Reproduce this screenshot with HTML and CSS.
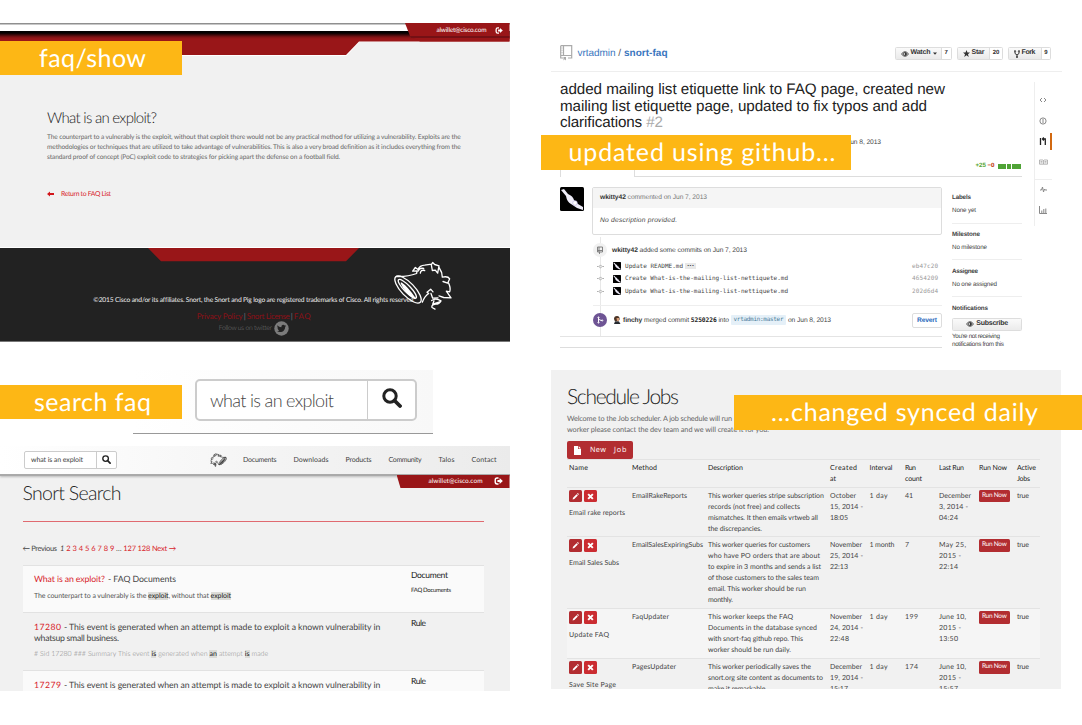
FILE: index.html
```html
<!DOCTYPE html>
<html lang="en">
<head>
<meta charset="utf-8">
<title>Snort FAQ workflow</title>
<link rel="stylesheet" href="styles.css">
</head>
<body>
<svg class="defs" width="0" height="0">
  <symbol id="pig" viewBox="370 118 180 152">
    <g class="pig-lines" fill="none" stroke="currentColor" stroke-linejoin="round" stroke-linecap="round">
      <ellipse cx="415" cy="206" rx="53" ry="20" transform="rotate(46 415 206)"/>
      <ellipse cx="413" cy="204" rx="38" ry="10" transform="rotate(46 413 204)"/>
      <path d="M395 187Q412 198 436 233Q408 217 395 187" fill="currentColor"/>
      <path d="M380 167Q415 168 441 158L442 150L429 151L437 140L445 146Q450 134 465 133L486 130L489 125L495 131L508 135L504 157L497 148L488 149L485 132M445 151Q450 140 462 143M452 157Q453 146 465 149M508 140Q518 154 518 169Q535 165 540 174L534 187L520 182M537 187Q544 203 540 213L530 211L544 231L522 230L508 225M458 244Q465 226 477 218L472 214L483 205L490 213M484 218L489 232L505 231M486 239Q499 230 514 240Q509 250 498 250Q484 252 487 260L496 265M493 240L489 250L510 243"/>
    </g>
  </symbol>
  <symbol id="logout" viewBox="0 0 24 22">
    <path d="M12 3H8Q3 3 3 8V14Q3 19 8 19H12" fill="none" stroke="currentColor" stroke-width="4"/>
    <path d="M9 8H15V3L24 11L15 19V14H9Z" fill="currentColor"/>
  </symbol>
  <symbol id="search" viewBox="0 0 20 20">
    <circle cx="8" cy="8" r="6.2" fill="none" stroke="currentColor" stroke-width="3"/>
    <path d="M12.5 12.5L18 18" stroke="currentColor" stroke-width="3.8" stroke-linecap="round"/>
  </symbol>
  <symbol id="eye" viewBox="0 0 16 12">
    <path d="M1 6Q8-3 15 6Q8 15 1 6Z" fill="none" stroke="currentColor" stroke-width="1.8"/>
    <circle cx="8" cy="6" r="3" fill="none" stroke="currentColor" stroke-width="1.6"/><path d="M8 3A3 3 0 0 1 8 9Z" fill="currentColor"/>
  </symbol>
  <symbol id="commit" viewBox="0 0 18 12">
    <path d="M0 6H4M14 6H18M9 2L13 6L9 10L5 6Z" fill="none" stroke="currentColor" stroke-width="2.4"/>
  </symbol>
  <symbol id="avatar" viewBox="0 0 24 24">
    <rect width="24" height="24" rx="1.5" fill="#000"/>
    <path d="M1 3L4 2L8 7Q13 9 14 13L18 17L23 20V23L17 21L11 17Q7 15 6 9Z" fill="#eeecf8"/>
    <circle cx="15" cy="16" r="2.3" fill="#fff" stroke="#b6abdd" stroke-width=".6"/>
  </symbol>
  <symbol id="pencil" viewBox="0 0 12 12">
    <path d="M1 11L1.8 8L7.8 2L10 4.2L4 10.2ZM8.5 1.3L9.3.6Q10 0 10.7.7L11.4 1.4Q12 2 11.4 2.7L10.7 3.5Z" fill="currentColor"/>
  </symbol>
  <symbol id="cross" viewBox="0 0 12 12">
    <path d="M2 2L10 10M10 2L2 10" stroke="currentColor" stroke-width="3.4"/>
  </symbol>
</svg>

<main class="board">
  <div class="column">
    <section class="panel faq">
      <svg class="faq-shapes" width="510" height="36" viewBox="0 0 510 36">
        <defs><linearGradient id="shade" x1="0" y1="0" x2="0" y2="1">
          <stop offset="0" stop-color="#000"/><stop offset=".25" stop-color="#050000"/><stop offset=".75" stop-color="#7d1214"/><stop offset="1" stop-color="#991618"/>
        </linearGradient></defs>
        <path d="M0 8H510V19H359.5L346.5 33H0Z" fill="#fff"/>
        <path d="M0 8H509.500V18.500H359L346 32H0Z" fill="#991618"/>
        <rect width="510" height="8" fill="#fff"/>
        <rect width="510" height="1.500" fill="#8f8f8f"/>
        <rect y="8" width="509.500" height="8" fill="url(#shade)"/>
        <path d="M405 0H509.500V18.500H420L410 13Z" fill="#991618"/>
        <path d="M411 13H509.500V15H411Z" fill="#741014"/>
      </svg>
      <div class="user user-top"><span class="f" data-w="50">alwillet@cisco.com</span><svg width="8" height="7"><use href="#logout"/></svg></div>
      <div class="faq-body">
        <h2><span class="f" data-w="110">What is an exploit?</span></h2>
        <p>
          <span class="f" data-w="414">The counterpart to a vulnerably is the exploit, without that exploit there would not be any practical method for utilizing a vulnerability. Exploits are the</span>
          <span class="f" data-w="414">methodologies or techniques that are utilized to take advantage of vulnerabilities. This is also a very broad definition as it includes everything from the</span>
          <span class="f" data-w="293">standard proof of concept (PoC) exploit code to strategies for picking apart the defense on a football field.</span>
        </p>
        <a class="back"><svg width="7" height="6" viewBox="0 0 7 6"><path d="M0 3L3 .4V2H7V4H3V5.600Z" fill="#d2151b"/></svg><span class="f" data-w="50">Return to FAQ List</span></a>
      </div>
      <footer class="footer">
        <svg class="notch" width="212" height="14" viewBox="0 0 212 14"><path d="M0 0H211L198 13.300H13Z" fill="#991618"/></svg>
        <svg class="footer-pig" width="60" height="51"><use href="#pig"/></svg>
        <div class="copy"><span class="f" data-w="320">©2015 Cisco and/or its affiliates. Snort, the Snort and Pig logo are registered trademarks of Cisco. All rights reserved</span></div>
        <div class="links"><span class="f" data-w="46">Privacy Policy</span><i>|</i><span class="f" data-w="43">Snort License</span><i>|</i><span class="f" data-w="17">FAQ</span></div>
        <div class="follow"><span class="f" data-w="53">Follow us on twitter</span>
          <svg width="15" height="15" viewBox="0 0 15 15"><circle cx="7.500" cy="7.500" r="7.200" fill="#7b7b7b"/><path d="M3.300 4.300Q5 6.100 7.300 6.200Q7.200 3.900 9 3.800Q10 3.700 10.600 4.400L11.900 4L11.300 5L12 5L11.200 5.800Q11 9.500 8.200 10.700Q5.500 11.700 3 10.300Q4.600 10.200 5.200 9.600Q4 9.200 3.800 8.300H4.500Q3.300 7.600 3.300 6.500L4 6.700Q3 5.500 3.300 4.300Z" fill="#222"/></svg>
        </div>
      </footer>
      <div class="label label-show"><span class="f" data-w="107">faq/show</span></div>
    </section>

    <section class="panel lookup">
      <div class="field field-big"><div class="value"><span class="f" data-w="124">what is an exploit</span></div><div class="go"><svg width="20" height="20"><use href="#search"/></svg></div></div>
      <div class="label label-search"><span class="f" data-w="117">search faq</span></div>
    </section>

    <section class="panel results">
      <header class="topbar">
        <div class="field field-small"><div class="value"><span class="f" data-w="52">what is an exploit</span></div><div class="go"><svg width="9" height="9"><use href="#search"/></svg></div></div>
        <svg class="mini-pig" width="17" height="14"><use href="#pig"/></svg>
        <nav>
          <span class="f" data-w="33.500">Documents</span><span class="f" data-w="35">Downloads</span><span class="f" data-w="26">Products</span><span class="f" data-w="33">Community</span><span class="f" data-w="16">Talos</span><span class="f" data-w="25">Contact</span>
        </nav>
      </header>
      <div class="user user-tab"><span class="f" data-w="54">alwillet@cisco.com</span><svg width="9" height="8"><use href="#logout"/></svg></div>
      <div class="results-body">
        <h2><span class="f" data-w="99">Snort Search</span></h2>
        <div class="pages"><span class="f" data-w="34.500">← Previous</span><em>1</em><span class="f red" data-w="48">2 3 4 5 6 7 8 9</span><b>…</b><span class="f red" data-w="53">127 128 Next →</span></div>
        <article class="hit lit">
          <div class="hit-text">
            <div class="hit-title"><span class="f red" data-w="71">What is an exploit?</span><span class="f" data-w="68">- FAQ Documents</span></div>
            <div class="snippet dark"><span class="f" data-w="197">The counterpart to a vulnerably is the <mark>exploit</mark>, without that <mark>exploit</mark></span></div>
          </div>
          <div class="kind"><span class="f" data-w="37">Document</span><small class="f" data-w="40">FAQ Documents</small></div>
        </article>
        <article class="hit second">
          <div class="hit-text">
            <div class="hit-title"><span class="f red" data-w="27">17280</span><span class="f" data-w="316">- This event is generated when an attempt is made to exploit a known vulnerability in</span></div>
            <div class="hit-title"><span class="f" data-w="85">whatsup small business.</span></div>
            <div class="snippet"><span class="f" data-w="234"># Sid 17280 ### Summary This event <mark>is</mark> generated when <mark>an</mark> attempt <mark>is</mark> made</span></div>
          </div>
          <div class="kind"><span class="f" data-w="15">Rule</span></div>
        </article>
        <article class="hit lit third">
          <div class="hit-text">
            <div class="hit-title"><span class="f red" data-w="27">17279</span><span class="f" data-w="316">- This event is generated when an attempt is made to exploit a known vulnerability in</span></div>
          </div>
          <div class="kind"><span class="f" data-w="15">Rule</span></div>
        </article>
      </div>
    </section>
  </div>

  <div class="column column-right">
    <section class="github">
      <header class="repo">
        <svg width="13" height="17" viewBox="0 0 13 17" fill="none" stroke="#aaa"><path d="M.7.7H11.700V13H8M3 13H.700V.700M3.500.700V10.500M.700 10.500H11.700" stroke-width="1.200"/><path d="M2 2.500V9.500" stroke-dasharray="1 1.300" stroke-width=".8"/><path d="M3.500 12H6V15.500L4.700 14.200L3.500 15.500Z" fill="#aaa" stroke="none"/></svg>
        <div class="repo-name"><span class="f" data-w="38">vrtadmin</span><i>/</i><b class="f" data-w="43.500">snort-faq</b></div>
        <div class="social">
          <div class="pill watch"><b><svg width="8" height="6"><use href="#eye"/></svg><span class="f" data-w="20">Watch</span><svg width="4" height="3" viewBox="0 0 4 3"><path d="M0 .500H4L2 2.800Z" fill="#333"/></svg></b><span>7</span></div>
          <div class="pill star"><b><svg width="7" height="7" viewBox="0 0 14 14"><path d="M7 0L9 5H14L10 8.500L11.500 14L7 10.500L2.500 14L4 8.500L0 5H5Z" fill="#333"/></svg><span class="f" data-w="13">Star</span></b><span>20</span></div>
          <div class="pill fork"><b><svg width="6" height="8" viewBox="0 0 12 16" fill="none" stroke="#333" stroke-width="2"><path d="M2 4V7L6 10L10 7V4M6 10V13"/><circle cx="2" cy="2.500" r="1.300"/><circle cx="10" cy="2.500" r="1.300"/><circle cx="6" cy="14" r="1.300"/></svg><span class="f" data-w="14">Fork</span></b><span>9</span></div>
        </div>
      </header>
      <div class="gh-main">
        <div class="gh-content">
          <h1><span class="f" data-w="385">added mailing list etiquette link to FAQ page, created new</span><span class="f" data-w="367">mailing list etiquette page, updated to fix typos and add</span><span class="f" data-w="103">clarifications <i>#2</i></span></h1>
          <div class="meta"><span class="f" data-w="34">Jun 8, 2013</span></div>
          <div class="tabs"><div class="tab"><span class="f" data-w="56">◦ Conversation 0</span></div><div class="tabs-rest"><span class="f" data-w="34">Commits 3</span><span class="f" data-w="63">▣ Files changed 2</span><div class="diff"><b class="plus">+25</b><b class="minus">−0</b><u></u><u></u><u></u><u></u><u></u></div></div></div>
          <div class="gh-cols">
            <div class="thread">
              <div class="comment-row">
                <svg width="24" height="24"><use href="#avatar"/></svg>
                <div class="comment"><div class="comment-head"><span class="f" data-w="107"><b>wkitty42</b> commented on Jun 7, 2013</span></div><div class="comment-body"><span class="f" data-w="77">No description provided.</span></div></div>
              </div>
              <div class="timeline">
                <div class="event"><span class="dot"><svg width="8" height="8" viewBox="0 0 8 8" fill="none" stroke="#777" stroke-width=".9"><path d="M1.500 1H6.500V6H1.500ZM3 1V6M1.500 4.500H6.500M3.500 6V8"/></svg></span><span class="f" data-w="135"><b>wkitty42</b> added some commits on Jun 7, 2013</span></div>
                <div class="commits">
                  <div class="commit"><svg width="7" height="5"><use href="#commit"/></svg><svg width="8" height="8"><use href="#avatar"/></svg><span class="f" data-w="58">Update README.md</span><span class="more">•••</span><span class="f sha" data-w="26">eb47c20</span></div>
                  <div class="commit"><svg width="7" height="5"><use href="#commit"/></svg><svg width="8" height="8"><use href="#avatar"/></svg><span class="f" data-w="163">Create What-is-the-mailing-list-nettiquete.md</span><span class="f sha" data-w="26">4654209</span></div>
                  <div class="commit"><svg width="7" height="5"><use href="#commit"/></svg><svg width="8" height="8"><use href="#avatar"/></svg><span class="f" data-w="163">Update What-is-the-mailing-list-nettiquete.md</span><span class="f sha" data-w="26">202d6d4</span></div>
                </div>
                <div class="merge">
                  <span class="dot purple"><svg width="8" height="8" viewBox="0 0 8 8" fill="none" stroke="#fff"><path d="M2.500 1.500V6.500M2.500 2.500Q3 4.500 6 4.500"/><circle cx="2.500" cy="1.500" r=".6"/><circle cx="2.500" cy="6.500" r=".6"/><circle cx="6.200" cy="4.500" r=".6"/></svg></span>
                  <svg width="8" height="8" viewBox="0 0 8 8"><path d="M1 3Q1 0 4 0Q7 0 6.500 3.500L5.500 5.500H2Z" fill="#4b3325"/><path d="M3.500 2H6V5H4Z" fill="#d79c77"/><path d="M1 8L2 5.500H6L7.500 8Z" fill="#252a30"/></svg>
                  <span class="f" data-w="106"><b>finchy</b> merged commit <code>5250226</code> into</span><span class="branch"><span class="f" data-w="50">vrtadmin:master</span></span><span class="f" data-w="43">on Jun 8, 2013</span><span class="revert"><b class="f" data-w="20">Revert</b></span>
                </div>
              </div>
              <div class="next"></div>
            </div>
            <aside class="side">
              <div class="side-block"><b class="f" data-w="19">Labels</b><span class="f" data-w="24">None yet</span></div>
              <div class="side-block"><b class="f" data-w="28">Milestone</b><span class="f" data-w="35">No milestone</span></div>
              <div class="side-block"><b class="f" data-w="26">Assignee</b><span class="f" data-w="45">No one assigned</span></div>
              <div class="side-block last"><b class="f" data-w="36">Notifications</b><div class="subscribe"><svg width="8" height="6"><use href="#eye"/></svg><b class="f" data-w="32">Subscribe</b></div><span class="f tight" data-w="48">You're not receiving</span><span class="f tight" data-w="52">notifications from this</span></div>
            </aside>
          </div>
        </div>
        <div class="rail">
          <span><svg width="8" height="6" viewBox="0 0 8 6"><path d="M3 1L1 3L3 5M5 1L7 3L5 5"/></svg></span>
          <span><svg width="8" height="8" viewBox="0 0 8 8"><circle cx="4" cy="4" r="3.100"/><path d="M4 2V6"/></svg></span>
          <span class="on"><svg width="8" height="9" viewBox="0 0 8 9"><path d="M1.500 1V8M3.500 2H6.300V8M4.800.500L3.500 2L4.800 3.500" stroke-width="1.300"/></svg></span>
          <span class="pale"><svg width="9" height="6" viewBox="0 0 9 6"><path d="M.500 1H4L4.500 1.500L5 1H8.500V5.200H.500ZM4.500 1.500V5M1.500 2.500H3.500M5.500 2.500H7.500M1.500 3.800H3.500M5.500 3.800H7.500" stroke-width=".7"/></svg></span>
          <span class="gap"><svg width="7" height="7" viewBox="0 0 7 7"><path d="M0 4H1.500L2.500 1L3.500 6L4.500 3L5.200 4H7"/></svg></span>
          <span><svg width="8" height="8" viewBox="0 0 8 8"><path d="M.500 0V7.500H8M2.800 7V4.500M4.800 7V3M6.800 7V2.500"/></svg></span>
        </div>
      </div>
    </section>
    <div class="label label-github"><span class="f" data-w="267">updated using github...</span></div>

    <section class="panel jobs">
      <h2><span class="f" data-w="112">Schedule Jobs</span></h2>
      <p><span class="f" data-w="165">Welcome to the Job scheduler. A job schedule will run</span><span class="f" data-w="202">worker please contact the dev team and we will create it for you.</span></p>
      <div class="new-job"><svg width="7" height="9" viewBox="0 0 7 9"><path d="M0 0H4V3H7V9H0Z" fill="#fff"/><path d="M4.700 0L7 2.400H4.700Z" fill="#fff"/></svg><span class="f" data-w="16">New</span><span class="f" data-w="12.500">Job</span></div>
      <div class="table">
        <div class="row head">
          <div><span class="f" data-w="19">Name</span></div><div><span class="f" data-w="25">Method</span></div><div><span class="f" data-w="35">Description</span></div><div><span class="f" data-w="27">Created</span><span>at</span></div><div><span class="f" data-w="23">Interval</span></div><div><span class="f" data-w="11">Run</span><span class="f" data-w="17">count</span></div><div><span class="f" data-w="25">Last Run</span></div><div><span class="f" data-w="28">Run Now</span></div><div><span class="f" data-w="19">Active</span><span class="f" data-w="13">Jobs</span></div>
        </div>
        <div class="row r1">
          <div><div class="acts"><i><svg width="8" height="8"><use href="#pencil"/></svg></i><i><svg width="8" height="8"><use href="#cross"/></svg></i></div><span class="f" data-w="56">Email rake reports</span></div>
          <div><span class="f" data-w="55">EmailRakeReports</span></div>
          <div><span class="f" data-w="116">This worker queries stripe subscription</span><span class="f" data-w="92">records (not free) and collects</span><span class="f" data-w="110">mismatches. It then emails vrtweb all</span><span class="f" data-w="54">the discrepancies.</span></div>
          <div><span class="f" data-w="26">October</span><span class="f" data-w="33">15, 2014 -</span><span class="f" data-w="18">18:05</span></div>
          <div><span class="f" data-w="18">1 day</span></div><div><span class="f" data-w="8">41</span></div>
          <div><span class="f" data-w="32">December</span><span class="f" data-w="29">3, 2014 -</span><span class="f" data-w="19">04:24</span></div>
          <div><strong><span class="f" data-w="25">Run Now</span></strong></div><div><span class="f" data-w="12">true</span></div>
        </div>
        <div class="row r2">
          <div><div class="acts"><i><svg width="8" height="8"><use href="#pencil"/></svg></i><i><svg width="8" height="8"><use href="#cross"/></svg></i></div><span class="f" data-w="50">Email Sales Subs</span></div>
          <div><span class="f" data-w="71">EmailSalesExpiringSubs</span></div>
          <div><span class="f" data-w="102">This worker queries for customers</span><span class="f" data-w="112">who have PO orders that are about</span><span class="f" data-w="113">to expire in 3 months and sends a list</span><span class="f" data-w="111">of those customers to the sales team</span><span class="f" data-w="98">email. This worker should be run</span><span class="f" data-w="25">monthly.</span></div>
          <div><span class="f" data-w="32">November</span><span class="f" data-w="33">25, 2014 -</span><span class="f" data-w="18">22:13</span></div>
          <div><span class="f" data-w="25">1 month</span></div><div><span>7</span></div>
          <div><span class="f" data-w="27">May 25,</span><span class="f" data-w="22">2015 -</span><span class="f" data-w="19">22:14</span></div>
          <div><strong><span class="f" data-w="25">Run Now</span></strong></div><div><span class="f" data-w="12">true</span></div>
        </div>
        <div class="row r3">
          <div><div class="acts"><i><svg width="8" height="8"><use href="#pencil"/></svg></i><i><svg width="8" height="8"><use href="#cross"/></svg></i></div><span class="f" data-w="40">Update FAQ</span></div>
          <div><span class="f" data-w="37">FaqUpdater</span></div>
          <div><span class="f" data-w="85">This worker keeps the FAQ</span><span class="f" data-w="109">Documents in the database synced</span><span class="f" data-w="95">with snort-faq github repo. This</span><span class="f" data-w="83">worker should be run daily.</span></div>
          <div><span class="f" data-w="32">November</span><span class="f" data-w="33">24, 2014 -</span><span class="f" data-w="19">22:48</span></div>
          <div><span class="f" data-w="18">1 day</span></div><div><span class="f" data-w="13">199</span></div>
          <div><span class="f" data-w="27">June 10,</span><span class="f" data-w="22">2015 -</span><span class="f" data-w="19">13:50</span></div>
          <div><strong><span class="f" data-w="25">Run Now</span></strong></div><div><span class="f" data-w="12">true</span></div>
        </div>
        <div class="row r4">
          <div><div class="acts"><i><svg width="8" height="8"><use href="#pencil"/></svg></i><i><svg width="8" height="8"><use href="#cross"/></svg></i></div><span class="f" data-w="47">Save Site Page</span></div>
          <div><span class="f" data-w="44">PagesUpdater</span></div>
          <div><span class="f" data-w="103">This worker periodically saves the</span><span class="f" data-w="115">snort.org site content as documents to</span><span class="f" data-w="59">make it remarkable.</span></div>
          <div><span class="f" data-w="32">December</span><span class="f" data-w="33">19, 2014 -</span><span class="f" data-w="18">15:17</span></div>
          <div><span class="f" data-w="18">1 day</span></div><div><span class="f" data-w="13">174</span></div>
          <div><span class="f" data-w="27">June 10,</span><span class="f" data-w="22">2015 -</span><span class="f" data-w="19">15:57</span></div>
          <div><strong><span class="f" data-w="25">Run Now</span></strong></div><div><span class="f" data-w="12">true</span></div>
        </div>
      </div>
    </section>
    <div class="label label-daily"><span class="f" data-w="267">...changed synced daily</span></div>
  </div>
</main>
<script src="fit.js"></script>
</body>
</html>
```

FILE: styles.css
```css
* { box-sizing: border-box; }
body { margin: 0; width: 1082px; height: 725px; overflow: hidden; background: #fff; color: #444; font-family: Lato, "Liberation Sans", sans-serif; font-weight: 300; text-rendering: geometricPrecision; }
h1, h2, p { margin: 0; font-weight: 300; }
h2 { color: #222; }
svg { display: block; flex: none; }
.defs { position: absolute; }
.pig-lines { stroke-width: var(--pig-line, 4); }
.f { display: inline-block; white-space: pre; flex: none; }
.red { color: #d8232a; }

.board { position: relative; display: grid; grid-template-columns: 551px 531px; height: 725px; }
.column { padding-top: 23px; }
.column-right { padding-top: 40px; }

/* slide captions */
.label { position: absolute; display: flex; align-items: center; height: 34.500px; background: #fdb715; color: #fff; font-size: 25px; font-weight: 400; line-height: 34px; z-index: 2; }
.label-show { left: 0; top: 40.500px; width: 181.500px; padding-left: 39px; }
.label-search { left: 0; top: 384.500px; width: 181.500px; padding-left: 34px; }
.label-github { left: 540.500px; top: 135px; width: 310.500px; padding-left: 28px; }
.label-daily { left: 734px; top: 395px; width: 348px; padding-left: 37px; }

/* FAQ article */
.faq { width: 509.500px; height: 319px; background: #f1f1f1; display: flex; flex-direction: column; }
.user { display: flex; align-items: center; color: #fff; font-size: 6.500px; font-weight: 400; height: 13px; }
.user-top { justify-content: flex-end; gap: 8px; padding: 1px 7px 0 0; margin-top: -35.500px; position: relative; flex: none; }
.faq-shapes { flex: none; margin-bottom: -.5px; }
.faq-body { padding: 73px 0 0 47px; flex: 1; }
.faq-body h2 { font-size: 15px; line-height: 18px; }
.faq-body p { margin-top: 4.500px; font-size: 6.600px; line-height: 10.200px; font-weight: 400; color: #666; }
.faq-body p .f { display: block; }
.back { display: flex; align-items: center; gap: 7px; margin-top: 26.500px; font-size: 6.800px; line-height: 10px; font-weight: 400; color: #d8232a; }
.footer { position: relative; height: 95px; border-top: 1px solid #fff; border-bottom: 1px solid #777; background: #222; display: flex; flex-direction: column; align-items: center; flex: none; }
.notch { margin-right: 1.500px; }
.footer-pig { position: absolute; left: 393.300px; top: 11.800px; color: #fff; }
.copy { margin-top: 32.500px; font-size: 6.700px; line-height: 11px; color: #eee; font-weight: 400; padding-right: 3px; }
.links { display: flex; margin-top: 4px; font-size: 8px; line-height: 12px; color: #8c1017; font-weight: 400; padding-right: 2px; }
.links i { font-style: normal; color: #777; width: 4px; text-align: center; }
.follow { display: flex; align-items: center; gap: 2px; font-size: 6.800px; color: #777; height: 15px; margin-top: -.8px; padding-right: 2px; }

/* enlarged search box */
.lookup { margin: 28px 0 0 133px; width: 300px; height: 64px; padding: 8.500px 0 0 62px; background: linear-gradient(90deg, #fff, #f8f8f8); border-bottom: 1px solid #999; }
.field { display: flex; background: #fff; border: 1px solid #ccc; }
.value { display: flex; align-items: center; flex: 1; }
.go { display: flex; align-items: center; justify-content: center; color: #222; border-left: 1px solid #ccc; }
.field-big { width: 222px; height: 42px; border-width: 2px; border-radius: 5px; font-size: 18px; }
.field-big .value { padding-left: 13px; }
.field-big .go { width: 48px; padding-bottom: 4px; }

/* search results */
.results { margin-top: 12px; width: 509.500px; height: 245px; background: #f1f1f1; overflow: hidden; }
.topbar { display: flex; align-items: center; height: 29.500px; padding: 0 0 0 24px; background: linear-gradient(90deg, #fff, #ebebeb); border-bottom: 2px solid #aaa; box-shadow: 0 1px 2px #bbb; }
.field-small { width: 93px; height: 18px; border-radius: 2px; font-size: 7px; font-weight: 400; }
.field-small .value { padding-left: 6px; }
.field-small .go { width: 20px; }
.mini-pig { margin-left: 93px; transform: scaleX(-1); color: #333; --pig-line: 7; }
.topbar nav { display: flex; gap: 17px; margin: 1px 0 0 16px; font-size: 7px; font-weight: 400; }
.user-tab { position: relative; margin: -1px 0 0 auto; width: 113px; height: 13.500px; padding: 0 7px 0 32px; justify-content: space-between; background: #991618; clip-path: polygon(0 0, 100% 0, 100% 100%, 4px 100%); }
.results-body { padding: 0 26px 0 22.500px; }
.results-body h2 { margin-top: -4.500px; height: 38px; border-bottom: 1px solid #e06a70; font-size: 19.500px; line-height: 20px; }
.pages { display: flex; align-items: center; height: 43px; padding-top: 10px; font-size: 7.500px; font-weight: 400; }
.pages em { margin: 0 2px 0 3px; }
.pages b { width: 9px; text-align: center; font-weight: 400; }
.hit { display: flex; border-top: 1px solid #e2e2e2; padding: 7.500px 0 0 11.500px; height: 47.700px; }
.hit.second { height: 58.300px; }
.lit { background: #fafafa; }
.hit-text { width: 377px; }
.hit-title { display: flex; gap: 3px; font-size: 8.700px; line-height: 11px; font-weight: 400; }
.snippet { margin-top: 6.500px; font-size: 7px; line-height: 10px; color: #888; }
.snippet.dark { color: #555; font-weight: 400; }
mark { background: #dcdcd8; color: #222; font-weight: 400; }
.kind { display: flex; flex-direction: column; align-items: flex-start; margin-top: -4px; font-size: 8.500px; line-height: 12px; color: #222; font-weight: 400; }
.kind small { font-size: 6px; line-height: 10px; margin-top: 5px; }

/* GitHub pull request */
.github { width: 511px; height: 308px; font-family: "Liberation Sans", Arial, sans-serif; font-weight: 400; color: #444; font-size: 6.700px; overflow: hidden; }
.repo { display: flex; align-items: center; height: 32px; padding: 0 11px 4px 9px; border-bottom: 1px solid #eee; }
.repo-name { display: flex; margin-left: 4.500px; font-size: 10px; color: #3a76be; }
.repo-name i { font-style: normal; color: #555; width: 8.500px; text-align: center; }
.social { display: flex; margin-left: auto; gap: 5px; }
.pill { display: flex; height: 12.500px; border: 1px solid #ddd; border-radius: 1.500px; font-size: 6px; font-weight: 700; color: #333; line-height: 10.500px; }
.pill > b { display: flex; align-items: center; gap: 2px; padding-left: 4.500px; font-size: 7px; background: linear-gradient(#fafafa, #eaeaea); }
.pill > span { flex: 1; text-align: center; border-left: 1px solid #ddd; }
.watch { width: 57px; } .watch > b { width: 44.500px; }
.star { width: 46px; } .star > b { width: 31px; }
.fork { width: 43px; } .fork > b { width: 32px; }
.gh-main { display: flex; }
.gh-content { width: 483px; padding: 10.300px 0 0 9px; }
h1 { display: flex; flex-direction: column; align-items: flex-start; font-size: 15.200px; line-height: 16.500px; font-weight: 400; color: #222; }
h1 i { font-style: normal; color: #aaa; }
.meta { display: flex; height: 22px; padding: 6.500px 0 0 287px; line-height: 10px; }
.tabs { display: flex; height: 23.200px; color: #777; }
.tab { width: 75px; border: 1px solid #ddd; border-width: 0 1px 0 1px; padding: 10px 0 0 8px; line-height: 8px; }
.tabs-rest { flex: none; width: 387px; display: flex; gap: 19px; align-items: flex-end; border-bottom: 1px solid #ddd; padding: 0 1px 5.500px 18px; line-height: 8px; }
.diff { display: flex; align-items: center; margin-left: auto; font-size: 6.200px; }
.plus { color: #55a532; margin-right: 1.500px; } .minus { color: #bd2c00; margin-right: 3px; }
.diff u { width: 4.200px; height: 4.500px; background: #4fa336; margin-right: .5px; }
.gh-cols { display: flex; gap: 10px; margin-top: 10px; }
.thread { width: 382px; flex: none; }
.comment-row { display: flex; gap: 8px; }
.comment { flex: 1; height: 48px; border: 1px solid #ddd; border-radius: 2px; }
.comment-head { height: 20px; padding-left: 7px; line-height: 20px; background: #f5f5f5; color: #777; }
.comment b, .event b, .merge b { color: #333; }
.comment-body { padding-left: 7px; line-height: 26px; font-style: italic; }
.timeline { position: relative; padding: 8.500px 0 0 33px; height: 102px; border-bottom: 1.500px solid #e4e4e4; }
.timeline::before { content: ""; position: absolute; left: 40px; top: 2px; bottom: 0; width: 1px; background: #e8e8e8; z-index: -1; }
.event, .commit, .merge { display: flex; align-items: center; }
.event { height: 13.500px; gap: 5px; }
.dot { display: flex; align-items: center; justify-content: center; width: 14px; height: 14px; border-radius: 7px; background: #f1f1f1; flex: none; }
.purple { background: #6e5494; }
.commits { padding-top: 3px; }
.commit { height: 12.500px; font-family: "DejaVu Sans Mono", monospace; font-size: 6px; padding-left: 3.500px; }
.commit > svg:first-child { color: #aaa; margin-right: 9.500px; }
.commit .f { margin-left: 4px; }
.commit .f.sha { margin-left: auto; margin-right: 4px; color: #999; }
.more { margin-left: 2px; width: 11px; height: 6px; line-height: 6px; font-size: 4px; text-align: center; background: #e8e8e8; }
.merge { height: 29px; margin-top: 8px; border-top: 1px solid #eee; }
.merge > svg { margin: 0 2px 0 6px; }
code { font: 700 6.300px "DejaVu Sans Mono", monospace; color: #222; }
.branch { background: #e5f0f8; color: #4a7c98; font: 6px "DejaVu Sans Mono", monospace; line-height: 10px; padding: 0 2.500px; margin: 0 2px; border-radius: 1px; }
.revert { margin-left: auto; height: 15.500px; line-height: 13.500px; border: 1px solid #ddd; border-radius: 2px; padding: 0 4px; }
.merge .revert b { color: #2b6bbd; }
.next { height: 11px; border-bottom: 1px solid #ddd; }
.side { width: 70px; flex: none; font-size: 6.300px; line-height: 8px; }
.side-block { display: flex; flex-direction: column; align-items: flex-start; gap: 5px; height: 36.700px; padding-top: 7.500px; border-bottom: 1px solid #eee; }
.side-block.last { height: 60px; gap: 0; border: 0; }
.subscribe { display: flex; align-items: center; justify-content: center; gap: 2.500px; width: 70px; height: 13px; margin: 5px 0 2.500px; border: 1px solid #ddd; border-radius: 1.500px; background: linear-gradient(#fafafa, #ebebeb); color: #333; font-size: 7px; }
.tight { line-height: 7.700px; }
.rail { width: 18px; height: 144px; margin-top: 10px; border-left: 1px solid #eee; }
.rail span { display: flex; align-items: center; justify-content: center; height: 20.500px; padding-right: 1px; }
.rail svg { fill: none; stroke: #888; stroke-width: 1; }
.rail span:first-child { margin-top: 8px; }
.rail .on { border-right: 2px solid #d26911; height: 17px; margin: 1.700px 0; padding: 0; }
.rail .on svg { stroke: #222; }
.rail .pale svg { stroke: #999; }
.rail .gap { margin-top: 7px; border-top: 1px solid #eee; }

/* scheduled jobs */
.jobs { margin-top: 22px; width: 510px; height: 319px; background: #f1f1f1; padding: 15px 0 0 16px; overflow: hidden; }
.jobs h2 { font-size: 21px; line-height: 24px; }
.jobs p { margin-top: 4px; font-size: 7.300px; line-height: 11.300px; font-weight: 400; color: #666; }
.jobs p .f { display: block; }
.new-job { display: flex; align-items: center; width: 66px; height: 18px; margin-top: 5.500px; padding-left: 7px; background: #b22d31; border-radius: 2px; color: #fff; font: 400 7.300px "Open Sans", sans-serif; }
.new-job .f { margin-left: 8px; }
.new-job svg + .f { margin-left: 9px; }
.table { width: 472.500px; font-size: 7px; line-height: 11px; font-weight: 400; }
.row { display: grid; grid-template-columns: 65px 76px 122px 39.500px 35.500px 34px 40px 38px 22px; border-top: 1px solid #e3e3e3; padding-top: 3px; }
.row > div { display: flex; flex-direction: column; align-items: flex-start; }
.row > div:first-child { padding-left: 2px; }
.head { height: 27.700px; color: #222; }
.r1 { height: 49.700px; } .r2 { height: 72px; } .r3 { height: 50px; background: #f5f5f5; } .r4 { height: 50px; }
.acts { display: flex; gap: 2px; height: 12.500px; margin: -1px 0 6px; }
.acts i { display: flex; align-items: center; justify-content: center; width: 13px; height: 12.500px; border-radius: 1.500px; background: #b22d31; color: #fff; }
.acts i + i { background: #cb2c31; }
.acts svg { width: 7px; height: 7px; }
.row strong { display: block; width: 30.500px; height: 12.500px; margin-top: -1px; border-radius: 1.500px; background: #b22d31; color: #fff; font-size: 6.500px; line-height: 12.500px; font-weight: 400; text-align: center; }
```

FILE: fit.js
```js
document.querySelectorAll(".f[data-w]").forEach(function (el) {
  var chars = el.textContent.length;
  var natural = el.getBoundingClientRect().width;
  var block = getComputedStyle(el).display === "block";
  if (block) {
    el.style.width = "max-content";
    natural = el.getBoundingClientRect().width;
  }
  el.style.letterSpacing = (parseFloat(el.dataset.w) - natural) / Math.max(1, chars - 1) + "px";
  el.style.width = el.dataset.w + "px";
});
```
